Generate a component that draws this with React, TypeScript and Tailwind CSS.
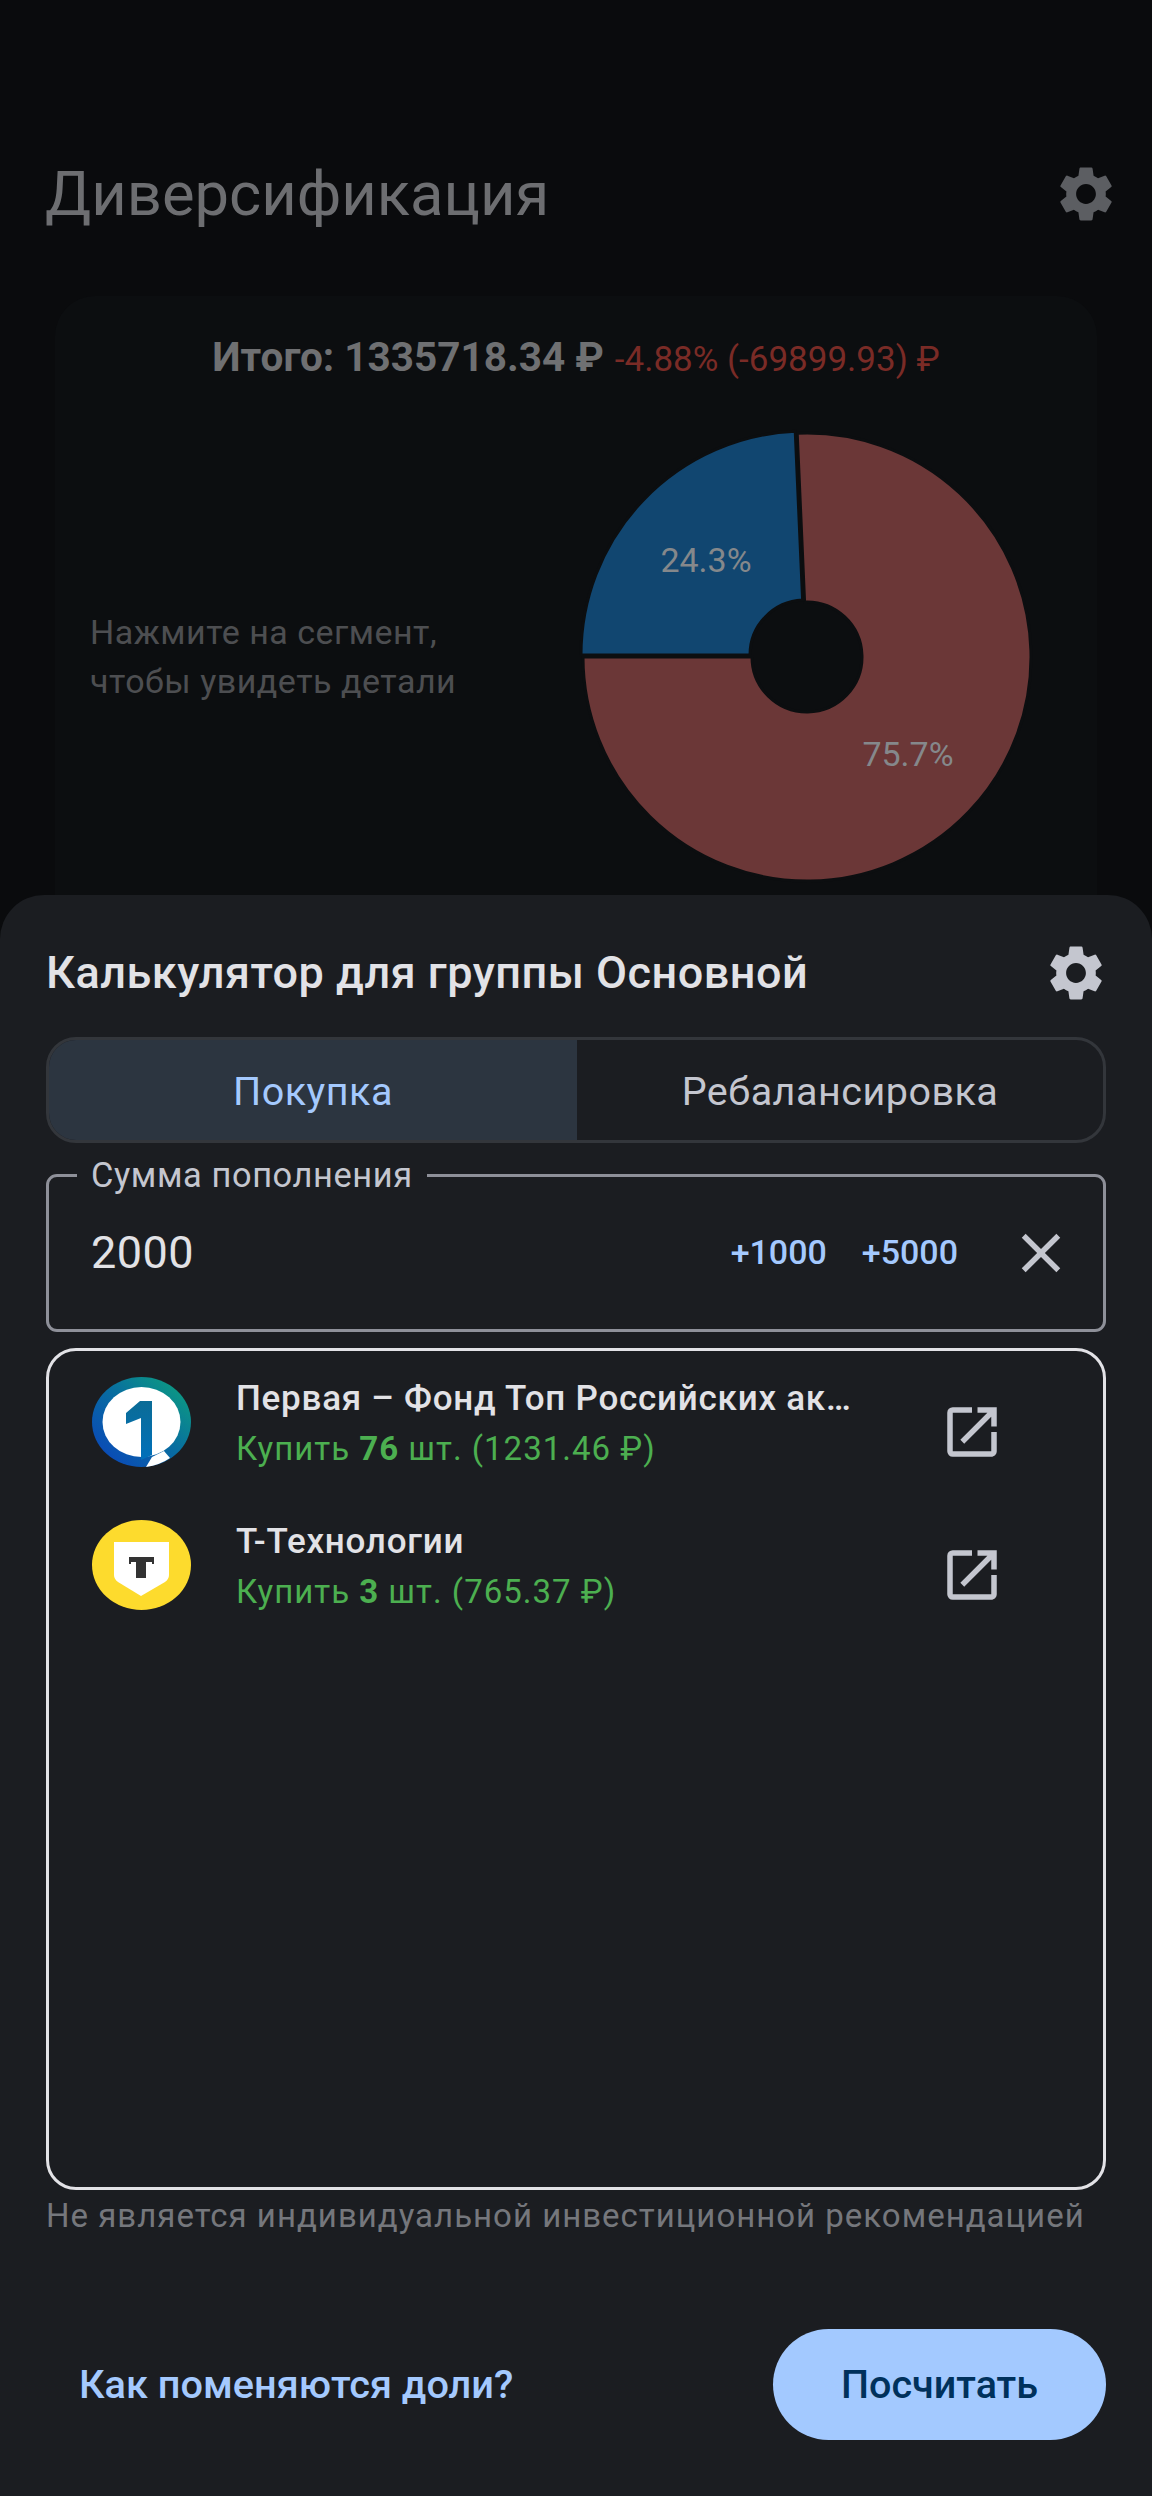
import React from "react";
import { MdClose, MdOpenInNew, MdSettings } from "react-icons/md";

const sector = (r0: number, r1: number, a0: number, a1: number) => {
  const pt = (r: number, a: number) => {
    const t = ((a - 90) * Math.PI) / 180;
    return `${(230 + r * Math.cos(t)).toFixed(2)} ${(230 + r * Math.sin(t)).toFixed(2)}`;
  };
  const large = a1 - a0 > 180 ? 1 : 0;
  return `M${pt(r1, a0)} A${r1} ${r1} 0 ${large} 1 ${pt(r1, a1)} L${pt(r0, a1)} A${r0} ${r0} 0 ${large} 0 ${pt(r0, a0)} Z`;
};

const PieChart = () => (
  <svg width="460" height="460" viewBox="0 0 460 460" className="shrink-0">
    <path d={sector(55, 224, 357.5, 630)} fill="#6b3737" stroke="#0c0e10" strokeWidth="3" />
    <path d={sector(55, 224, 270, 357.5)} fill="#114670" stroke="#0c0e10" strokeWidth="3" transform="translate(-2 -2)" />
    <text x="129" y="145" textAnchor="middle" fontSize="34" fill="#85888b">24.3%</text>
    <text x="331" y="339" textAnchor="middle" fontSize="34" fill="#85888b">75.7%</text>
  </svg>
);

const FirstLogo = () => (
  <svg width="99" height="90" viewBox="0 0 99 90" className="shrink-0">
    <defs>
      <linearGradient id="ring" x1="0.1" y1="0.9" x2="0.9" y2="0.1">
        <stop offset="0" stopColor="#0a49b8" />
        <stop offset="0.55" stopColor="#086f9f" />
        <stop offset="1" stopColor="#0c9a82" />
      </linearGradient>
      <linearGradient id="one" x1="0" y1="0" x2="0" y2="1">
        <stop offset="0" stopColor="#0b6c96" />
        <stop offset="1" stopColor="#0070bb" />
      </linearGradient>
    </defs>
    <ellipse cx="49.5" cy="45" rx="49.5" ry="45" fill="url(#ring)" />
    <ellipse cx="49.5" cy="45" rx="39" ry="35" fill="#fff" />
    <path d="M48 24 L60 24 L60 78 L49 83 L49 41 L34 47 L34 36 Z" fill="url(#one)" />
    <path d="M54 90 L60 80 L72 74 L78 81 Q68 88 54 90 Z" fill="#fff" />
  </svg>
);

const TechLogo = () => (
  <svg width="99" height="90" viewBox="0 0 99 90" className="shrink-0">
    <ellipse cx="49.5" cy="45" rx="49.5" ry="45" fill="#fddb2d" />
    <path d="M22 22 H77 V55 Q77 59 73 62 L49 76 L26 62 Q22 59 22 55 Z" fill="#fff" />
    <path d="M37 37 H62 V44 H60 V42 H54 V58 H44 V42 H39 V44 H37 Z" fill="#333" />
  </svg>
);

const positions = [
  { name: "Первая – Фонд Топ Российских ак…", amount: "76", sum: "(1231.46 ₽)", logo: <FirstLogo /> },
  { name: "Т-Технологии", amount: "3", sum: "(765.37 ₽)", logo: <TechLogo /> },
];

export default function App() {
  return (
    <div className="relative h-[2496px] w-full overflow-hidden bg-[#0a0b0d] font-['Roboto',sans-serif]">
      <div className="flex items-center justify-between pl-[45px] pr-[33px] pt-[150px]">
        <h1 className="text-[61.5px] leading-[88px] text-[#6d6e71]">Диверсификация</h1>
        <MdSettings size={66} color="#5c5e62" />
      </div>

      <div className="mx-[55px] mt-[58px] h-[800px] rounded-[40px] bg-[#0c0e10] pl-[35px] pt-[38px]">
        <div className="-ml-[35px] flex items-baseline justify-center gap-[11px] leading-[46px]">
          <span className="text-[40.5px] font-bold text-[#6f7072]">Итого: 1335718.34 ₽</span>
          <span className="text-[35px] text-[#7a2b26]">-4.88% (-69899.93) ₽</span>
        </div>
        <div className="mt-[44px] flex items-center justify-between pr-[60px]">
          <p className="text-[34px] leading-[49px] tracking-[0.5px] text-[#4d4e51]">
            Нажмите на сегмент,
            <br />
            чтобы увидеть детали
          </p>
          <PieChart />
        </div>
      </div>

      <div className="absolute inset-x-0 bottom-0 h-[1601px] rounded-t-[44px] bg-[#1b1d21] pl-[46px] pr-[46px]">
        <div className="flex items-center justify-between pt-[45px]">
          <h2 className="text-[45px] font-medium leading-[66px] tracking-[0.5px] text-[#e2e2e6]">
            Калькулятор для группы Основной
          </h2>
          <MdSettings size={66} color="#c4c6cf" className="-mr-[3px]" />
        </div>

        <div className="mt-[31px] flex h-[106px] overflow-hidden rounded-[30px] border-[3px] border-[#33363b]">
          <div className="flex w-[528px] items-center justify-center bg-[#2c3540] pt-[3px] text-[39.5px] tracking-[0.5px] text-[#a4c9fe]">
            Покупка
          </div>
          <div className="flex flex-1 items-center justify-center pt-[3px] text-[39.5px] tracking-[0.5px] text-[#c4c6cf]">
            Ребалансировка
          </div>
        </div>

        <fieldset className="mt-[13px] flex h-[176px] items-center rounded-[11px] border-[3px] border-[#8e9099] pb-[18px] pr-[29px]">
          <legend className="ml-[28px] px-[14px] text-[34.4px] leading-[38px] tracking-[0.6px] text-[#c4c6cf]">
            Сумма пополнения
          </legend>
          <div className="flex w-full items-center pl-[42px]">
            <span className="flex-1 text-[45px] tracking-[0.5px] text-[#e2e2e6]">2000</span>
            <span className="text-[34px] font-medium text-[#a4c9fe]">+1000</span>
            <span className="ml-[35px] text-[34px] font-medium text-[#a4c9fe]">+5000</span>
            <MdClose size={66} color="#c4c6cf" className="ml-[50px]" />
          </div>
        </fieldset>

        <div className="mt-[16px] h-[842px] rounded-[30px] border-[3px] border-[#e2e2e6] pl-[43px] pr-[98px] pt-[26px]">
          <div className="flex flex-col gap-[53px]">
            {positions.map((p) => (
              <div key={p.name} className="flex h-[90px] items-center">
                {p.logo}
                <div className="ml-[45px] w-[625px] pt-[3px]">
                  <div className="whitespace-nowrap text-[35px] font-medium leading-[48px] tracking-[0.75px] text-[#e2e2e6]">
                    {p.name}
                  </div>
                  <div className="mt-[3px] text-[33px] leading-[46px] tracking-[1px] text-[#4caf50]">
                    Купить <b>{p.amount}</b> шт. {p.sum}
                  </div>
                </div>
                <div className="ml-auto mt-[20px]">
                  <MdOpenInNew size={66} color="#c4c6cf" />
                </div>
              </div>
            ))}
          </div>
        </div>

        <p className="mt-[3px] text-[33px] leading-[46px] tracking-[1px] text-[#75777c]">
          Не является индивидуальной инвестиционной рекомендацией
        </p>

        <div className="mt-[90px] flex items-center justify-between pl-[33px]">
          <span className="text-[39.7px] font-medium text-[#a4c9fe]">Как поменяются доли?</span>
          <div className="flex h-[111px] w-[333px] items-center justify-center rounded-full bg-[#a3c9ff] text-[39.5px] font-medium text-[#00315c]">
            Посчитать
          </div>
        </div>
      </div>
    </div>
  );
}
